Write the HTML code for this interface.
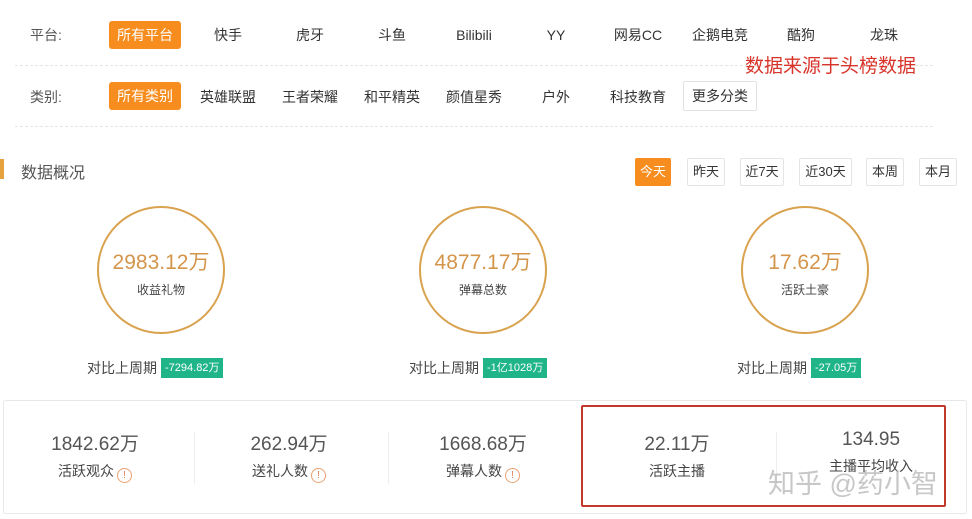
<!DOCTYPE html>
<html><head><meta charset="utf-8"><style>
*{margin:0;padding:0;box-sizing:border-box}
body{width:972px;height:519px;background:#fff;font-family:"Liberation Sans","Noto Sans CJK SC",sans-serif;color:#333;position:relative;overflow:hidden}
.a{position:absolute;white-space:nowrap}
.t{font-size:14px;color:#333;transform:translateX(-50%);line-height:20px}
.on{background:#f68d1e;color:#fff;border-radius:3px;padding:4px 8px;transform:none}
.dash{position:absolute;left:15px;width:918px;border-top:1px dashed #e6e6e6}
.btn{position:absolute;top:158px;height:28px;border:1px solid #e5e5e5;border-radius:2px;font-size:13px;line-height:26px;text-align:center;color:#333}
.circ{position:absolute;width:128px;height:128px;border:2px solid #d9a24e;border-radius:50%;text-align:center}
.circ b{display:block;font-weight:normal;font-size:21px;color:#d4954a;margin-top:38px}
.circ i{display:block;font-style:normal;font-size:12px;color:#444;margin-top:5px}
.cmp{position:absolute;top:358px;font-size:14px;color:#444;line-height:20px}
.tag{display:inline-block;background:#1fb589;color:#fff;font-size:11px;padding:0 4px;height:20px;line-height:20px;margin-left:4px;vertical-align:top}
.st{position:absolute;top:429px;text-align:center;width:190px}
.st b{display:block;font-weight:normal;font-size:19px;color:#555}
.st i{display:block;font-style:normal;font-size:14px;color:#444;margin-top:5px}
.ex{display:inline-block;width:15px;height:15px;border:1px solid #e8a070;border-radius:50%;font-size:10px;line-height:13px;color:#e08050;vertical-align:-2px;margin-left:3px}
.sep{position:absolute;top:432px;height:52px;border-left:1px solid #eee}
</style></head><body>
<div class="a" style="left:30px;top:25px;font-size:14px;color:#555">平台:</div>
<div class="a on" style="left:109px;top:21px;font-size:14px;line-height:20px">所有平台</div>
<div class="a t" style="left:228px;top:25px">快手</div>
<div class="a t" style="left:310px;top:25px">虎牙</div>
<div class="a t" style="left:392px;top:25px">斗鱼</div>
<div class="a t" style="left:474px;top:25px">Bilibili</div>
<div class="a t" style="left:556px;top:25px">YY</div>
<div class="a t" style="left:638px;top:25px">网易CC</div>
<div class="a t" style="left:720px;top:25px">企鹅电竞</div>
<div class="a t" style="left:801px;top:25px">酷狗</div>
<div class="a t" style="left:884px;top:25px">龙珠</div>
<div class="dash" style="top:65px"></div>
<div class="a" style="left:745px;top:51px;font-size:19px;color:#d8342a">数据来源于头榜数据</div>
<div class="a" style="left:30px;top:87px;font-size:14px;color:#555">类别:</div>
<div class="a on" style="left:109px;top:82px;font-size:14px;line-height:20px">所有类别</div>
<div class="a t" style="left:228px;top:87px">英雄联盟</div>
<div class="a t" style="left:310px;top:87px">王者荣耀</div>
<div class="a t" style="left:392px;top:87px">和平精英</div>
<div class="a t" style="left:474px;top:87px">颜值星秀</div>
<div class="a t" style="left:556px;top:87px">户外</div>
<div class="a t" style="left:638px;top:87px">科技教育</div>
<div class="a" style="left:683px;top:81px;width:74px;height:30px;border:1px solid #e2e2e2;border-radius:2px;font-size:14px;line-height:28px;text-align:center">更多分类</div>
<div class="dash" style="top:126px"></div>
<div class="a" style="left:0;top:159px;width:4px;height:20px;background:#e6a23c"></div>
<div class="a" style="left:21px;top:159px;font-size:16px;color:#555">数据概况</div>
<div class="btn" style="left:635px;width:36px;background:#f68d1e;border-color:#f68d1e;color:#fff">今天</div>
<div class="btn" style="left:687px;width:38px">昨天</div>
<div class="btn" style="left:740px;width:44px">近7天</div>
<div class="btn" style="left:799px;width:53px">近30天</div>
<div class="btn" style="left:866px;width:38px">本周</div>
<div class="btn" style="left:919px;width:38px">本月</div>
<div class="circ" style="left:97px;top:206px"><b>2983.12万</b><i>收益礼物</i></div>
<div class="circ" style="left:419px;top:206px"><b>4877.17万</b><i>弹幕总数</i></div>
<div class="circ" style="left:741px;top:206px"><b>17.62万</b><i>活跃土豪</i></div>
<div class="cmp" style="left:87px">对比上周期<span class="tag">-7294.82万</span></div>
<div class="cmp" style="left:409px">对比上周期<span class="tag">-1亿1028万</span></div>
<div class="cmp" style="left:737px">对比上周期<span class="tag">-27.05万</span></div>
<div class="a" style="left:3px;top:400px;width:964px;height:114px;border:1px solid #e8e8e8;border-radius:3px"></div>
<div class="sep" style="left:194px"></div>
<div class="sep" style="left:388px"></div>
<div class="sep" style="left:582px"></div>
<div class="sep" style="left:776px"></div>
<div class="st" style="left:0px"><b>1842.62万</b><i>活跃观众<span class="ex">!</span></i></div>
<div class="st" style="left:194px"><b>262.94万</b><i>送礼人数<span class="ex">!</span></i></div>
<div class="st" style="left:388px"><b>1668.68万</b><i>弹幕人数<span class="ex">!</span></i></div>
<div class="st" style="left:582px"><b>22.11万</b><i>活跃主播</i></div>
<div class="st" style="left:776px"><b>134.95</b><i>主播平均收入</i></div>
<div class="a" style="left:581px;top:405px;width:365px;height:102px;border:2px solid #c0392b;border-radius:2px"></div>
<div class="a" style="left:768px;top:462px;font-size:27px;color:rgba(180,180,180,.75)">知乎 @药小智</div>
</body></html>
